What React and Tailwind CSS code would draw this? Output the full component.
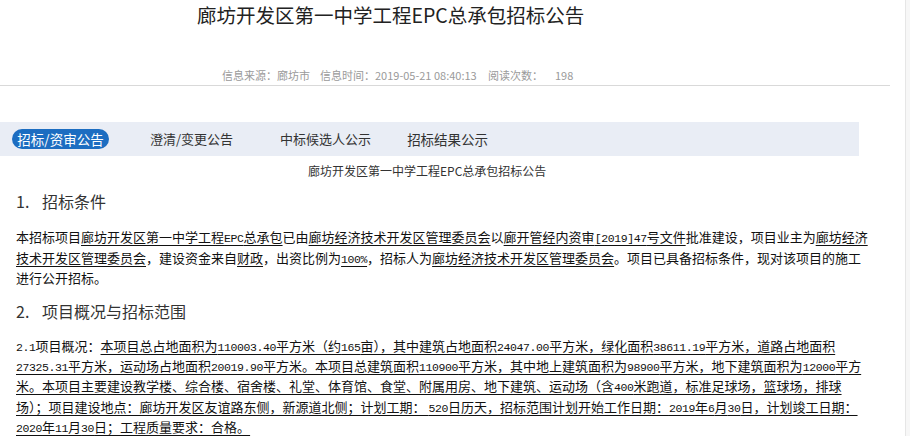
import React from "react";

const mono = "font-['Liberation_Mono',monospace] text-[11.5px] tracking-[-0.4px] leading-[1]";

function T({ s }) {
  const parts = s.split(/([\x21-\x7e]+)/);
  return parts.map((p, i) =>
    i % 2 === 1 ? (
      <span key={i} className={mono}>
        {p}
      </span>
    ) : (
      <React.Fragment key={i}>{p}</React.Fragment>
    )
  );
}

const U = ({ s }) => (
  <span className="underline decoration-[#111] underline-offset-[3px]">
    <T s={s} />
  </span>
);

export default function App() {
  const font = { fontFamily: '"Noto Sans CJK SC", "Noto Sans", sans-serif' };
  return (
    <div className="w-[910px] h-[436px] overflow-hidden bg-white flex" style={font}>
      <div className="w-[906px] shrink-0 border-r border-[#e6e6e6]">
        <div className="pl-[197px] leading-[30px] text-[19.5px] text-[#222] whitespace-nowrap">
          廊坊开发区第一中学工程EPC总承包招标公告
        </div>
        <div className="mt-[37px] pl-[222px] flex leading-[16px] text-[11px] text-[#9a9a9a] whitespace-nowrap">
          <span className="w-[98px]">信息来源：廊坊市</span>
          <span className="w-[168px]">信息时间：2019-05-21 08:40:13</span>
          <span className="w-[67px]">阅读次数：</span>
          <span>198</span>
        </div>
        <div className="mt-[2px] w-[890px] h-px bg-[#d9d9d9]" />
        <div className="mt-[36px] w-[859px] h-[34px] bg-[#e9edf5] flex items-center text-[13px] text-[#333] whitespace-nowrap">
          <div className="ml-[12px] w-[97px] h-[20px] rounded-full bg-[#1c6dc1] text-white flex items-center justify-center text-[13.5px]">
            招标/资审公告
          </div>
          <span className="ml-[41px]">澄清/变更公告</span>
          <span className="ml-[47px]">中标候选人公示</span>
          <span className="ml-[36px] text-[13.5px]">招标结果公示</span>
        </div>
        <div className="mt-[7px] pl-[308px] leading-[16px] text-[12px] text-[#333] whitespace-nowrap">
          廊坊开发区第一中学工程EPC总承包招标公告
        </div>
        <div className="mt-[11px] pl-[16px] flex leading-[22px] text-[16px] text-[#333] whitespace-nowrap">
          <span className="w-[26px]">1.</span>
          <span>招标条件</span>
        </div>
        <div className="mt-[15px] pl-[16px] leading-[20.5px] text-[13px] text-[#111] whitespace-nowrap">
          本招标项目<U s="廊坊开发区第一中学工程EPC总承包" />已由<U s="廊坊经济技术开发区管理委员会" />以<U s="廊开管经内资审[2019]47号文件" />批准建设，项目业主为<U s="廊坊经济" />
          <br />
          <U s="技术开发区管理委员会" />，建设资金来自<U s="财政" />，出资比例为<U s="100%" />，招标人为<U s="廊坊经济技术开发区管理委员会" />。项目已具备招标条件，现对该项目的施工
          <br />
          进行公开招标。
        </div>
        <div className="mt-[11px] pl-[16px] flex leading-[22px] text-[16px] text-[#333] whitespace-nowrap">
          <span className="w-[26px]">2.</span>
          <span>项目概况与招标范围</span>
        </div>
        <div className="mt-[14px] pl-[16px] leading-[20.4px] text-[13px] text-[#111] whitespace-nowrap">
          <T s="2.1项目概况：" />
          <U s="本项目总占地面积为110003.40平方米（约165亩），其中建筑占地面积24047.00平方米，绿化面积38611.19平方米，道路占地面积" />
          <br />
          <U s="27325.31平方米，运动场占地面积20019.90平方米。本项目总建筑面积110900平方米，其中地上建筑面积为98900平方米，地下建筑面积为12000平方" />
          <br />
          <U s="米。本项目主要建设教学楼、综合楼、宿舍楼、礼堂、体育馆、食堂、附属用房、地下建筑、运动场（含400米跑道，标准足球场，篮球场，排球" />
          <br />
          <U s="场）；项目建设地点：廊坊开发区友谊路东侧，新源道北侧；计划工期： 520日历天，招标范围计划开始工作日期：2019年6月30日，计划竣工日期：" />
          <br />
          <U s="2020年11月30日；工程质量要求：合格。" />
        </div>
      </div>
      <div className="flex-1 bg-[#f7f7f7]" />
    </div>
  );
}
